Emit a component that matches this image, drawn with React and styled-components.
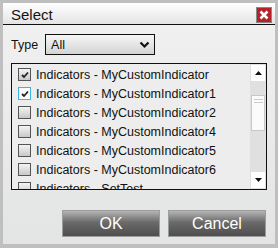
import React from "react";
import styled, { createGlobalStyle } from "styled-components";

const GlobalStyle = createGlobalStyle`
  html, body {
    margin: 0;
    padding: 0;
    background: #bfbfbf;
  }
  * {
    box-sizing: border-box;
  }
`;

const items = [
  { label: "Indicators - MyCustomIndicator", checked: true },
  { label: "Indicators - MyCustomIndicator1", checked: true, focused: true },
  { label: "Indicators - MyCustomIndicator2" },
  { label: "Indicators - MyCustomIndicator4" },
  { label: "Indicators - MyCustomIndicator5" },
  { label: "Indicators - MyCustomIndicator6" },
  { label: "Indicators - SetTest" },
];

function CheckMark() {
  return (
    <svg width="8" height="8" viewBox="0 0 8 8">
      <path d="M1 4 L3 6 L7 1.5" fill="none" stroke="#222" strokeWidth="1.8" />
    </svg>
  );
}

function App() {
  return (
    <Frame>
      <GlobalStyle />
      <Window>
        <TitleBar>
          <Title>Select</Title>
          <CloseButton>
            <svg width="10" height="10" viewBox="0 0 10 10">
              <path d="M1.5 1.5 L8.5 8.5 M8.5 1.5 L1.5 8.5" stroke="#fff" strokeWidth="2.6" />
            </svg>
          </CloseButton>
        </TitleBar>
        <Body>
          <TypeRow>
            <Label>Type</Label>
            <Dropdown>
              <span>All</span>
              <svg width="11" height="8" viewBox="0 0 11 8">
                <path d="M1.5 1.5 L5.5 5.5 L9.5 1.5" fill="none" stroke="#111" strokeWidth="2.2" />
              </svg>
            </Dropdown>
          </TypeRow>
          <ListBox>
            <Rows>
              {items.map((it) => (
                <Row key={it.label}>
                  <Box $focused={it.focused}>{it.checked && <CheckMark />}</Box>
                  <RowText>{it.label}</RowText>
                </Row>
              ))}
            </Rows>
            <ScrollBar>
              <Arrow>
                <svg width="7" height="4" viewBox="0 0 7 4">
                  <path d="M0 4 L3.5 0 L7 4 Z" fill="#111" />
                </svg>
              </Arrow>
              <Track>
                <Thumb>
                  <Grip />
                  <Grip />
                </Thumb>
              </Track>
              <Arrow>
                <svg width="7" height="4" viewBox="0 0 7 4">
                  <path d="M0 0 L3.5 4 L7 0 Z" fill="#111" />
                </svg>
              </Arrow>
            </ScrollBar>
          </ListBox>
          <Buttons>
            <Button>OK</Button>
            <Button>Cancel</Button>
          </Buttons>
        </Body>
      </Window>
    </Frame>
  );
}

const Frame = styled.div`
  width: 278px;
  height: 248px;
  padding: 3px 3px 4px 3px;
  background: #bfbfbf;
  font-family: "Liberation Sans", Arial, sans-serif;
`;

const Window = styled.div`
  display: flex;
  flex-direction: column;
  height: 100%;
`;

const TitleBar = styled.div`
  display: flex;
  align-items: center;
  justify-content: space-between;
  height: 22px;
  padding: 0 3px 0 8px;
  background: linear-gradient(#ffffff, #e4e4e4);
  border-bottom: 1px solid #111;
`;

const Title = styled.div`
  font-size: 15px;
  color: #151515;
  margin-top: 1px;
`;

const CloseButton = styled.div`
  display: flex;
  align-items: center;
  justify-content: center;
  width: 16px;
  height: 16px;
  background: #b3232b;
  border: 1px solid #888;
  margin-top: 2px;
`;

const Body = styled.div`
  flex: 1;
  display: flex;
  flex-direction: column;
  padding: 9px 8px 0 8px;
  background: linear-gradient(#eff0ef, #e3e4e4);
`;

const TypeRow = styled.div`
  display: flex;
  align-items: center;
  gap: 7px;
`;

const Label = styled.div`
  font-size: 12.5px;
  color: #111;
`;

const Dropdown = styled.div`
  display: flex;
  align-items: center;
  justify-content: space-between;
  width: 110px;
  height: 21px;
  padding: 0 4px 0 5px;
  border: 1px solid #111;
  background: linear-gradient(#f6f6f6, #d4d4d4);
  font-size: 12.5px;
  color: #111;
`;

const ListBox = styled.div`
  display: flex;
  margin-top: 8px;
  height: 127px;
  border: 1px solid #111;
  background: #ecedec;
  overflow: hidden;
`;

const Rows = styled.div`
  flex: 1;
  display: flex;
  flex-direction: column;
  padding: 1px 0 0 6px;
`;

const Row = styled.div`
  display: flex;
  align-items: center;
  gap: 5px;
  height: 19px;
  flex-shrink: 0;
`;

const Box = styled.div`
  display: flex;
  align-items: center;
  justify-content: center;
  width: 13px;
  height: 13px;
  border: 1px solid ${(p) => (p.$focused ? "#39b6e6" : "#555")};
  background: ${(p) => (p.$focused ? "#fafafa" : "linear-gradient(#f4f4f4, #c8c8c8)")};
`;

const RowText = styled.div`
  font-size: 12.5px;
  color: #111;
  white-space: nowrap;
`;

const ScrollBar = styled.div`
  display: flex;
  flex-direction: column;
  width: 16px;
  background: #e0e0e0;
`;

const Arrow = styled.div`
  display: flex;
  align-items: center;
  justify-content: center;
  height: 16px;
  background: #fff;
  margin: 1px;
`;

const Track = styled.div`
  flex: 1;
  padding-top: 13px;
`;

const Thumb = styled.div`
  display: flex;
  flex-direction: column;
  align-items: center;
  gap: 2px;
  height: 36px;
  margin: 0 1px;
  padding-top: 3px;
  background: #fbfbfb;
  border: 1px solid #c8c8c8;
`;

const Grip = styled.div`
  width: 9px;
  height: 1px;
  background: #ccc;
`;

const Buttons = styled.div`
  display: flex;
  justify-content: flex-end;
  gap: 8px;
  margin-top: 20px;
  padding-right: 1px;
`;

const Button = styled.div`
  display: flex;
  align-items: center;
  justify-content: center;
  width: 98px;
  height: 27px;
  border: 1px solid #9c9c9c;
  background: linear-gradient(#b4b4b4, #6a6a6a 45%, #4e4e4e);
  color: #fff;
  font-size: 16px;
`;

export default App;
